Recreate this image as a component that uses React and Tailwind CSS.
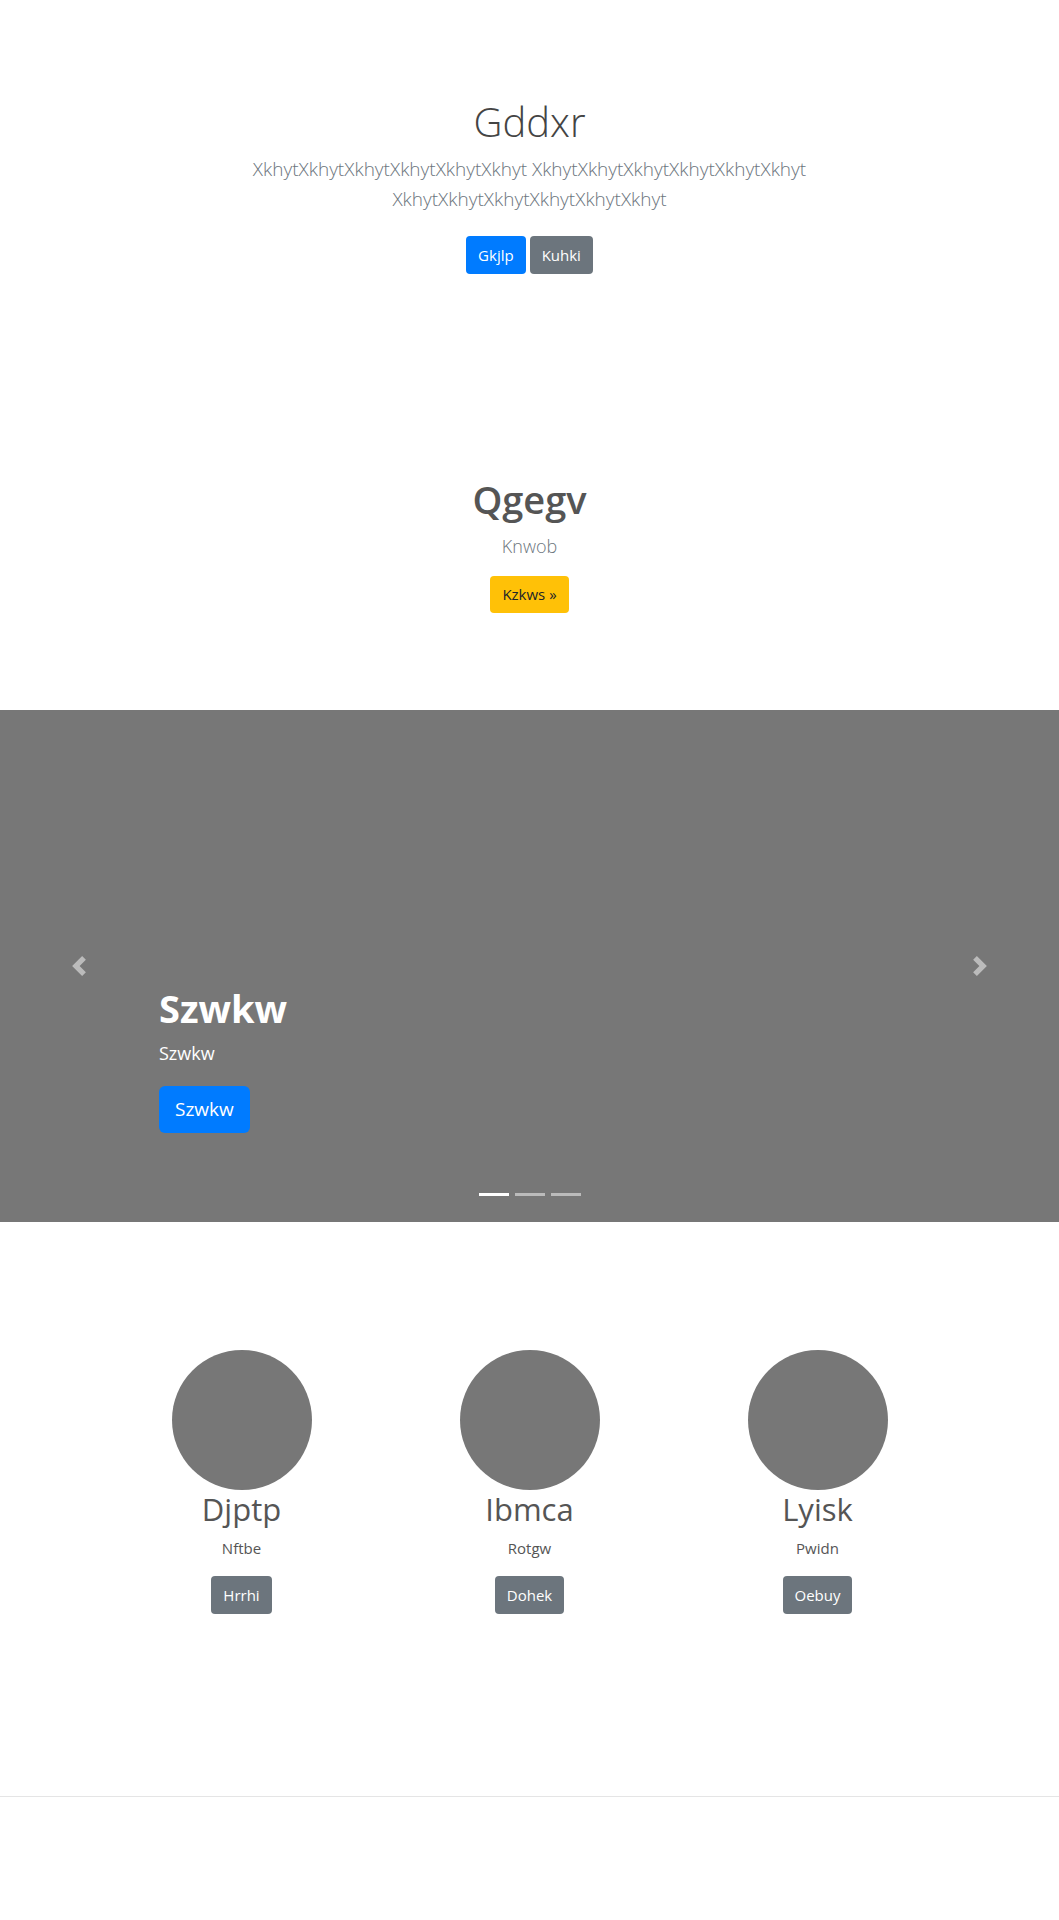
import React from 'react';

const font = { fontFamily: '"Open Sans", "Noto Sans", sans-serif' };

const Chevron = ({ dir }) => (
    <svg width="20" height="20" viewBox="0 0 8 8" fill="#fff" className="opacity-50">
        {dir === 'left' ? (
            <path d="M5.25 0l-4 4 4 4 1.5-1.5-2.5-2.5 2.5-2.5-1.5-1.5z" />
        ) : (
            <path d="M2.75 0l-1.5 1.5 2.5 2.5-2.5 2.5 1.5 1.5 4-4-4-4z" />
        )}
    </svg>
);

const App = () => {
    const people = [
        { name: 'Djptp', sub: 'Nftbe', btn: 'Hrrhi' },
        { name: 'Ibmca', sub: 'Rotgw', btn: 'Dohek' },
        { name: 'Lyisk', sub: 'Pwidn', btn: 'Oebuy' },
    ];

    return (
        <div className="min-h-screen bg-white text-[#555]" style={font}>
            {/* Jumbotron */}
            <section className="pt-[98px] text-center">
                <h1 className="text-[40px] leading-[48px] font-light mb-2 text-[#444]">Gddxr</h1>
                <p className="text-[19px] leading-[30px] font-light text-[#6c757d] max-w-[600px] mx-auto mb-[22px]">
                    XkhytXkhytXkhytXkhytXkhytXkhyt XkhytXkhytXkhytXkhytXkhytXkhyt XkhytXkhytXkhytXkhytXkhytXkhyt
                </p>
                <div className="flex justify-center gap-1">
                    <button className="h-[38px] px-3 rounded bg-[#007bff] text-white text-[15px]">Gkjlp</button>
                    <button className="h-[38px] px-3 rounded bg-[#6c757d] text-white text-[15px]">Kuhki</button>
                </div>
            </section>

            {/* Featured */}
            <section className="pt-[201px] text-center">
                <h2 className="text-[38px] leading-[48px] font-semibold mb-2">Qgegv</h2>
                <p className="text-[18px] leading-[30px] font-light text-[#6c757d] mb-[15px]">Knwob</p>
                <button className="h-[37px] px-3 rounded bg-[#ffc107] text-[#212529] text-[15px]">Kzkws »</button>
            </section>

            {/* Carousel */}
            <div className="relative mt-[97px] h-[512px] bg-[#777] flex flex-col justify-end pb-[89px] pl-[159px]">
                <div className="text-white">
                    <h3 className="text-[38px] leading-[48px] font-bold mb-[9px]">Szwkw</h3>
                    <p className="text-[18px] leading-[24px] mb-[21px]">Szwkw</p>
                    <button className="h-[47px] px-4 rounded-md bg-[#007bff] text-white text-[19px]">Szwkw</button>
                </div>
                <div className="absolute left-0 top-0 h-full w-[15%] flex items-center justify-center">
                    <Chevron dir="left" />
                </div>
                <div className="absolute right-0 top-0 h-full w-[15%] flex items-center justify-center">
                    <Chevron dir="right" />
                </div>
                <div className="absolute bottom-[26px] left-0 right-0 flex justify-center gap-[6px]">
                    <span className="w-[30px] h-[3px] bg-white" />
                    <span className="w-[30px] h-[3px] bg-white/50" />
                    <span className="w-[30px] h-[3px] bg-white/50" />
                </div>
            </div>

            {/* Marketing */}
            <section className="pt-[128px] flex justify-center">
                <div className="grid grid-cols-3 w-[864px]">
                    {people.map((p) => (
                        <div key={p.name} className="flex flex-col items-center text-center">
                            <div className="w-[140px] h-[140px] rounded-full bg-[#777]" />
                            <h4 className="text-[31px] leading-[38px] font-normal mb-2">{p.name}</h4>
                            <p className="text-[15px] leading-[24px] mb-4">{p.sub}</p>
                            <button className="h-[38px] px-3 rounded bg-[#6c757d] text-white text-[15px]">{p.btn}</button>
                        </div>
                    ))}
                </div>
            </section>

            <hr className="mt-[182px] border-t border-[#e5e5e5]" />
            <div className="h-[121px]" />
        </div>
    );
};

export default App;
